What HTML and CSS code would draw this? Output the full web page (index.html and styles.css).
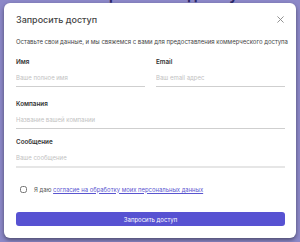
FILE: index.html
```html
<!DOCTYPE html>
<html lang="ru">
<head>
  <meta charset="UTF-8" />
  <meta name="viewport" content="width=device-width, initial-scale=1.0" />
  <title>Запросить доступ</title>
  <link rel="stylesheet" href="styles.css">
</head>
<body>

  <section class="page">
    <h1 class="page-title">Коммерческий доступ</h1>
  </section>

  <div class="overlay">
    <div class="modal">
      <div class="modal-header">
        <h2>Запросить доступ</h2>
        <button class="close" type="button" aria-label="Закрыть">
          <svg width="7" height="7" viewBox="0 0 10 10">
            <path d="M1 1 L9 9 M9 1 L1 9" stroke="#888" stroke-width="1.3" stroke-linecap="round" />
          </svg>
        </button>
      </div>

      <p class="intro">Оставьте свои данные, и мы свяжемся с вами для предоставления коммерческого доступа</p>

      <form class="form">
        <div class="row">
          <label class="field">
            <span>Имя</span>
            <input type="text" placeholder="Ваше полное имя">
          </label>
          <label class="field">
            <span>Email</span>
            <input type="email" placeholder="Ваш email адрес">
          </label>
        </div>

        <label class="field company">
          <span>Компания</span>
          <input type="text" placeholder="Название вашей компании">
        </label>

        <label class="field message">
          <span>Сообщение</span>
          <input type="text" placeholder="Ваше сообщение">
        </label>

        <label class="consent">
          <input type="checkbox">
          <span>Я даю <a href="#">согласие на обработку моих персональных данных</a></span>
        </label>

        <button class="submit" type="button">Запросить доступ</button>
      </form>
    </div>
  </div>

</body>
</html>
```

FILE: styles.css
```css
body {
  margin: 0;
  height: 242px;
  overflow: hidden;
  font-family: 'Inter', sans-serif;
  background-color: #8c88c8;
  color: #333;
}

.page {
  display: flex;
  justify-content: center;
}

.page-title {
  margin: -12px 0 0;
  font-size: 14px;
  line-height: 14px;
  letter-spacing: 2px;
  color: #2e2a6a;
}

.overlay {
  position: absolute;
  top: 3px;
  left: 4px;
  right: 4px;
}

.modal {
  background: #fff;
  border-radius: 6px;
  height: 235px;
  box-sizing: border-box;
  padding: 9px 11px 0 12px;
  box-shadow: 0 2px 4px rgba(0, 0, 0, 0.45);
}

.modal-header {
  display: flex;
  justify-content: space-between;
  align-items: center;
  height: 14px;
}

.modal-header h2 {
  margin: 0;
  font-size: 9px;
  font-weight: 500;
  color: #444;
}

.close {
  border: 0;
  background: none;
  padding: 0;
  margin-right: 1px;
  display: flex;
}

.intro {
  margin: 12px 0 0;
  font-size: 5.97px;
  line-height: 8px;
  color: #444;
  white-space: nowrap;
}

.form {
  display: flex;
  flex-direction: column;
}

.row {
  display: grid;
  grid-template-columns: 1fr 1fr;
  gap: 11px;
}

.field {
  display: flex;
  flex-direction: column;
  margin-top: 12px;
}

.field span {
  font-size: 6.3px;
  line-height: 8px;
  font-weight: 600;
  color: #333;
}

.field input {
  border: 0;
  border-bottom: 1px solid #cfcfcf;
  padding: 8px 0 4px;
  height: 8px;
  line-height: 8px;
  font-family: 'Inter', sans-serif;
  font-size: 6px;
  color: #333;
  outline: none;
}

.field input::placeholder {
  color: #c2c2c2;
}

.company {
  margin-top: 13px;
}

.message {
  margin-top: 9px;
}

.message input {
  border-bottom: 2px solid #e6e6e6;
}

.consent {
  display: flex;
  align-items: center;
  gap: 7px;
  margin: 17px 0 0 4px;
  height: 8px;
  font-size: 5.9px;
  color: #555;
}

.consent input {
  margin: 0;
  width: 7px;
  height: 7px;
}

.consent a {
  color: #5a55d0;
}

.submit {
  margin-top: 19px;
  height: 14px;
  border: 0;
  border-radius: 3px;
  background: #5752d2;
  color: #fff;
  font-family: 'Inter', sans-serif;
  font-size: 6px;
}
```
